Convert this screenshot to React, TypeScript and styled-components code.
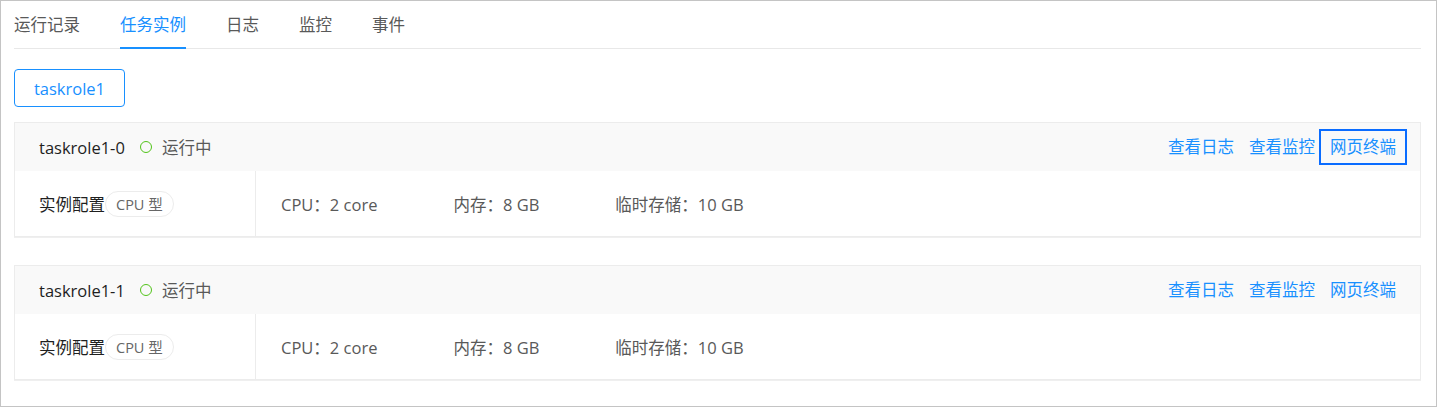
import React from "react";
import styled, { createGlobalStyle } from "styled-components";

const GlobalStyle = createGlobalStyle`
    html, body {
        margin: 0;
        padding: 0;
        background: #fff;
    }

    * {
        box-sizing: border-box;
    }
`;

const Page = styled.div`
    width: 1437px;
    height: 407px;
    border: 1px solid #c4c4c4;
    padding: 0 15px 0 13px;
    font-family: "Open Sans", "Noto Sans CJK SC", sans-serif;
    font-size: 16.5px;
    color: #262626;
    overflow: hidden;
`;

const TabBar = styled.div`
    display: flex;
    gap: 40px;
    height: 48px;
    border-bottom: 1px solid #e8e8e8;
`;

const Tab = styled.div<{ $active?: boolean }>`
    height: 48px;
    padding-top: 12px;
    line-height: 24px;
    color: ${(p) => (p.$active ? "#1890ff" : "#595959")};
    border-bottom: 2px solid ${(p) => (p.$active ? "#1890ff" : "transparent")};
    cursor: pointer;
`;

const RoleButton = styled.button`
    display: block;
    margin-top: 20px;
    width: 111px;
    height: 38px;
    padding: 0;
    border: 1px solid #1890ff;
    border-radius: 4px;
    background: #fff;
    color: #1890ff;
    font-family: inherit;
    font-size: 16.5px;
    cursor: pointer;
`;

const CardList = styled.div`
    display: flex;
    flex-direction: column;
    gap: 28px;
    margin-top: 15px;
`;

const Card = styled.div`
    border: 1px solid #ececec;
    box-shadow: 0 1px 0 #efefef;
`;

const CardHeader = styled.div`
    display: flex;
    align-items: center;
    justify-content: space-between;
    height: 48px;
    padding: 0 18px 0 24px;
    background: #f9f9f9;
`;

const Title = styled.div`
    display: flex;
    align-items: center;
    color: #1f1f1f;
`;

const Status = styled.span`
    display: flex;
    align-items: center;
    margin-left: 15px;
    color: #595959;

    &::before {
        content: "";
        width: 10px;
        height: 10px;
        margin-right: 10px;
        border: 1.5px solid #52c41a;
        border-radius: 50%;
    }
`;

const Actions = styled.div`
    display: flex;
    align-items: center;
    gap: 3px;
`;

const ActionButton = styled.button<{ $focused?: boolean }>`
    padding: 0 6px;
    height: 26px;
    border: none;
    background: transparent;
    color: #1890ff;
    font-family: inherit;
    font-size: 16.5px;
    line-height: 26px;
    cursor: pointer;
    outline: ${(p) => (p.$focused ? "2px solid #0a6cff" : "none")};
    outline-offset: 3px;
`;

const CardBody = styled.div`
    display: flex;
    height: 65px;
`;

const ConfigCell = styled.div`
    display: flex;
    align-items: center;
    width: 241px;
    padding-left: 24px;
    border-right: 1px solid #ececec;
    color: #1f1f1f;
`;

const TypeTag = styled.span`
    display: inline-flex;
    align-items: center;
    height: 26px;
    padding: 0 10px;
    border: 1px solid #ececec;
    border-radius: 13px;
    color: #666;
    font-size: 14.5px;
`;

const SpecCell = styled.div`
    display: flex;
    align-items: center;
    gap: 76px;
    padding-left: 25px;
    color: #595959;
`;

const Spec = styled.span``;

const tabs = ["运行记录", "任务实例", "日志", "监控", "事件"];

const instances = [
    { name: "taskrole1-0", status: "运行中", cpu: "2 core", mem: "8 GB", disk: "10 GB", focused: true },
    { name: "taskrole1-1", status: "运行中", cpu: "2 core", mem: "8 GB", disk: "10 GB", focused: false },
];

const App = () => {
    return (
        <Page>
            <GlobalStyle />
            <TabBar>
                {tabs.map((t) => (
                    <Tab key={t} $active={t === "任务实例"}>
                        {t}
                    </Tab>
                ))}
            </TabBar>
            <RoleButton>taskrole1</RoleButton>
            <CardList>
                {instances.map((inst) => (
                    <Card key={inst.name}>
                        <CardHeader>
                            <Title>
                                {inst.name}
                                <Status>{inst.status}</Status>
                            </Title>
                            <Actions>
                                <ActionButton>查看日志</ActionButton>
                                <ActionButton>查看监控</ActionButton>
                                <ActionButton $focused={inst.focused}>网页终端</ActionButton>
                            </Actions>
                        </CardHeader>
                        <CardBody>
                            <ConfigCell>
                                实例配置
                                <TypeTag>CPU 型</TypeTag>
                            </ConfigCell>
                            <SpecCell>
                                <Spec>CPU：{inst.cpu}</Spec>
                                <Spec>内存：{inst.mem}</Spec>
                                <Spec>临时存储：{inst.disk}</Spec>
                            </SpecCell>
                        </CardBody>
                    </Card>
                ))}
            </CardList>
        </Page>
    );
};

export default App;
